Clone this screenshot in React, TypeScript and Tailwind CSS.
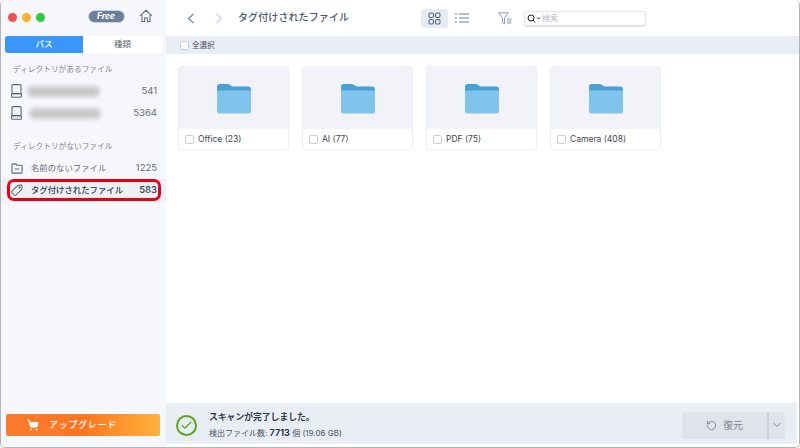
import { Check, ChevronDown, RotateCw, ShoppingCart } from 'lucide-react';

const FONT = "font-['Inter','Noto_Sans_CJK_JP',sans-serif]";

const HardDrive = () => (
  <svg width="11" height="14" viewBox="0 0 11 14" fill="none" stroke="#5a6780" strokeWidth="1.1">
    <path d="M2 .6h7a1 1 0 0 1 1 1V9.600H1V1.600a1 1 0 0 1 1-1z" />
    <rect x=".6" y="9.600" width="9.800" height="3.600" rx="1" />
  </svg>
);

const FolderMinus = () => (
  <svg width="12" height="11" viewBox="0 0 13 12" fill="none" stroke="#5a6780" strokeWidth="1.2">
    <path d="M1 2a1 1 0 0 1 1-1h3l1.200 1.400H11a1 1 0 0 1 1 1V10a1 1 0 0 1-1 1H2a1 1 0 0 1-1-1z" />
    <path d="M4 6.600h5" />
  </svg>
);

const Tag = () => (
  <svg width="12" height="12" viewBox="0 0 13 13" fill="none" stroke="#5a6780" strokeWidth="1.1">
    <path d="M1 8l6.300-6.400a1 1 0 0 1 .7-.3l3.200-.1a.8.8 0 0 1 .8.8l-.1 3.200a1 1 0 0 1-.3.7L5.300 12.200a1 1 0 0 1-1.400 0L1 9.400A1 1 0 0 1 1 8z" />
    <circle cx="9.300" cy="3.800" r=".7" />
  </svg>
);

const Row = ({ icon, count, children, active }: { icon: React.ReactNode; count: string; children: React.ReactNode; active?: boolean }) => (
  <div className={`h-[22px] flex items-center pl-[10px] pr-[9px] ${active ? 'bg-[#eef0f5] text-[#2f3a4f] font-medium' : 'text-[#666c78]'}`}>
    <span className="w-[20px] flex items-center shrink-0">{icon}</span>
    <div className="flex-1 text-[8.400px] whitespace-nowrap">{children}</div>
    <span className="text-[9.500px]">{count}</span>
  </div>
);

const Blur = ({ w }: { w: string }) => <div className={`h-[11px] rounded-full bg-[#c9c9cb] blur-[2px] ${w}`} />;

const Sidebar = () => (
  <aside className="w-[165px] shrink-0 bg-[#f6f7fb] flex flex-col">
    <div className="h-[35px] flex items-center pl-[7px] pr-[11px]">
      <div className="flex gap-[5.500px]">
        <span className="w-[8.500px] h-[8.500px] rounded-full bg-[#f0524f]" />
        <span className="w-[8.500px] h-[8.500px] rounded-full bg-[#f6b22f]" />
        <span className="w-[8.500px] h-[8.500px] rounded-full bg-[#2ec73f]" />
      </div>
      <span className="ml-[44px] -mt-[2px] w-[35px] h-[11px] rounded-full bg-[#6b7f99] ring-1 ring-[#c5d3e6] text-white text-[8.500px] italic font-bold flex items-center justify-center">Free</span>
      <svg className="ml-[15px] -mt-[3px]" width="14" height="14" viewBox="0 0 15 15" fill="none" stroke="#5a6780" strokeWidth="1.1">
        <path d="M1 7.400L7.500 1.400 14 7.400M3.200 6.400V13.500H6V9.600h3v3.900h2.800V6.400" />
      </svg>
    </div>
    <div className="ml-[4px] mr-[4px] mt-px h-[17px] flex rounded-[3px] overflow-hidden text-[8.500px]">
      <div className="w-[78px] bg-[#3a96fb] text-white font-medium flex items-center justify-center">パス</div>
      <div className="flex-1 bg-white text-[#5f6672] flex items-center justify-center">種類</div>
    </div>
    <div className="mt-[11px] pl-[12px] text-[7.700px] text-[#7f8697] h-[12px] flex items-center">ディレクトリがあるファイル</div>
    <div className="mt-[4px]">
      <Row icon={<HardDrive />} count="541"><Blur w="w-[73px] -ml-[4px]" /></Row>
      <Row icon={<HardDrive />} count="5364"><Blur w="w-[72px] -ml-[2px]" /></Row>
    </div>
    <div className="mt-[17px] pl-[12px] text-[7.700px] text-[#7f8697] h-[12px] flex items-center">ディレクトリがないファイル</div>
    <div className="mt-[4px]">
      <Row icon={<FolderMinus />} count="1225">名前のないファイル</Row>
      <div className="relative">
        <Row active icon={<Tag />} count="583">タグ付けされたファイル</Row>
        <div className="absolute left-[6px] right-[5px] top-0 bottom-0 border-[3px] border-[#e60012] rounded-[7px]" />
      </div>
    </div>
    <div className="mt-auto ml-[5px] mr-[6px] mb-[11px] h-[22px] rounded-[2px] bg-gradient-to-r from-[#fc7b30] via-[#fd7520] to-[#fdb23c] flex items-center pl-[21px] text-white text-[9px] font-medium">
      <ShoppingCart size={12} fill="white" strokeWidth={2} />
      <span className="ml-[10px] tracking-[0.7px]">アップグレード</span>
    </div>
  </aside>
);

const FolderCard = ({ label }: { label: string }) => (
  <div className="w-[111px] h-[84px] rounded-[3px] border border-[#eceef2] bg-white overflow-hidden">
    <div className="h-[62px] bg-[#f1f3f8] flex items-center justify-center">
      <svg width="34" height="31" viewBox="0 0 34 31">
        <path d="M0 4a3 3 0 0 1 3-3h8c2 0 3 2.500 5 2.500h15a3 3 0 0 1 3 3V12H0z" fill="#4a9fd4" />
        <path d="M0 7.500h34V28a2.500 2.500 0 0 1-2.500 2.500h-29A2.500 2.500 0 0 1 0 28z" fill="#80c3ec" />
      </svg>
    </div>
    <div className="h-[21px] flex items-center pl-[6px] text-[8.500px] text-[#3f4654]">
      <span className="w-[9px] h-[9px] rounded-[2px] border border-[#c9ccd2] bg-white shrink-0" />
      <span className="ml-[4px]">{label}</span>
    </div>
  </div>
);

const Toolbar = () => (
  <header className="h-[36px] shrink-0 flex items-center text-[#48566d]">
    <svg className="ml-[21px]" width="8" height="11" viewBox="0 0 8 11" fill="none" stroke="#7486a3" strokeWidth="1.300">
      <path d="M6.500 1L1.500 5.500l5 4.500" />
    </svg>
    <svg className="ml-[20px]" width="8" height="11" viewBox="0 0 8 11" fill="none" stroke="#c8d2e2" strokeWidth="1.300">
      <path d="M1.500 1l5 4.500-5 4.500" />
    </svg>
    <span className="ml-[15px] -mt-[1px] text-[10px] font-medium tracking-[0.1px] whitespace-nowrap">タグ付けされたファイル</span>
    <div className="ml-[72px] w-[27px] h-[19px] rounded-[3px] bg-[#e6eaf2] flex items-center justify-center">
      <svg width="13" height="13" viewBox="0 0 13 13" fill="none" stroke="#5a6780" strokeWidth="1.100">
        <rect x="1" y="1" width="4.500" height="4.500" rx="1.400" />
        <rect x="7.500" y="1" width="4.500" height="4.500" rx="1.400" />
        <rect x="1" y="7.500" width="4.500" height="4.500" rx="1.400" />
        <rect x="7.500" y="7.500" width="4.500" height="4.500" rx="1.400" />
      </svg>
    </div>
    <svg className="ml-[7px]" width="14" height="10" viewBox="0 0 14 10" fill="none" stroke="#6d7d98" strokeWidth="1">
      <path d="M0 1h2M4 1h10M0 5h2M4 5h10M0 9h2M4 9h10" />
    </svg>
    <svg className="ml-[29px]" width="14" height="13" viewBox="0 0 14 13" fill="none" stroke="#8a9ab4" strokeWidth="1">
      <path d="M.6 .8h9.800L6.600 5.600V12L4.400 10.500V5.600z" />
      <path d="M9 7h4.500M9 9h4.500M9 11h4.500" />
    </svg>
    <div className="ml-[12px] w-[122px] h-[15px] rounded-[3px] bg-white border border-[#e2e4e8] shadow-[0_1px_1px_rgba(0,0,0,0.12)] flex items-center pl-[2px]">
      <svg width="14" height="9" viewBox="0 0 14 9" fill="none" stroke="#222" strokeWidth="1">
        <circle cx="4" cy="4" r="3" /><path d="M6.200 6.200L8 8.500M10 3.500l1.500 1.500L13 3.500" />
      </svg>
      <span className="ml-[1px] text-[8px] text-[#b9bcc2]">検索</span>
    </div>
  </header>
);

export default function App() {
  return (
    <div className={`w-[800px] h-[448px] flex bg-white overflow-hidden rounded-[5px] border-x border-b border-[#b4b4b4] ${FONT}`}>
      <Sidebar />
      <main className="flex-1 flex flex-col min-w-0">
        <Toolbar />
        <div className="h-[18px] shrink-0 bg-[#e9edf4] flex items-center pl-[14px] text-[7.500px] text-[#4a505c]">
          <span className="w-[9px] h-[9px] rounded-[2px] border border-[#c9ccd2] bg-white" />
          <span className="ml-[3px] mt-[1px]">全選択</span>
        </div>
        <div className="flex-1 flex gap-[13px] pl-[12px] pt-[12px]">
          <FolderCard label="Office (23)" />
          <FolderCard label="AI (77)" />
          <FolderCard label="PDF (75)" />
          <FolderCard label="Camera (408)" />
        </div>
        <footer className="h-[41px] mb-[3px] mr-[2px] shrink-0 bg-[#e9edf4] flex items-center pt-[3px] pl-[10px] pr-[12px]">
          <span className="w-[21px] h-[21px] rounded-full border-2 border-[#5aa61f] flex items-center justify-center">
            <Check size={13} strokeWidth={2.2} className="text-[#5aa61f]" />
          </span>
          <div className="ml-[12px]">
            <div className="text-[8.800px] font-semibold text-[#2f3a4f]">スキャンが完了しました。</div>
            <div className="mt-[3px] text-[8px] text-[#4a5568]">検出ファイル数: <span className="font-bold text-[#2f3a4f] text-[9px]">7713</span> 個 (19.06 GB)</div>
          </div>
          <div className="ml-auto flex h-[27px] rounded-[3px] bg-[#dfe3ea] text-[#7d8692]">
            <div className="w-[85px] flex items-center justify-center text-[10px] gap-[6px]">
              <RotateCw size={11} className="-scale-x-100" />復元
            </div>
            <div className="w-[18px] border-l-2 border-[#cdd2da] flex items-center justify-center">
              <ChevronDown size={12} />
            </div>
          </div>
        </footer>
      </main>
    </div>
  );
}
